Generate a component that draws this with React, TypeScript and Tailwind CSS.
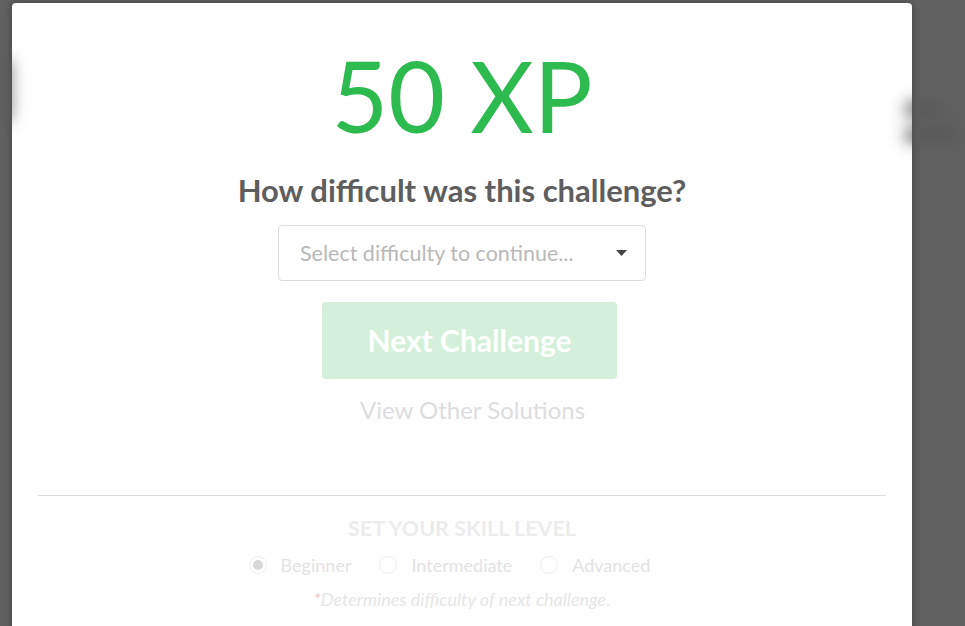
import React from "react";

const levels = ["Beginner", "Intermediate", "Advanced"];

const App: React.FC = () => {
  return (
    <div
      className="relative h-[626px] w-[965px] overflow-hidden bg-[#616161]"
      style={{ fontFamily: "Lato, 'Open Sans', sans-serif" }}
    >
      {/* faint blurred page content behind the overlay */}
      <div className="absolute left-[905px] top-[102px] h-[14px] w-[40px] rounded-full bg-[#5a5a5a] blur-[8px]" />
      <div className="absolute left-[905px] top-[128px] h-[14px] w-[55px] rounded-full bg-[#585858] blur-[8px]" />
      <div className="absolute left-0 top-[60px] h-[60px] w-[10px] bg-[#5b5b5b] blur-[8px]" />

      <div className="flex pl-[12px] pt-[3px]">
        <div className="flex h-[640px] w-[900px] flex-col items-center rounded-[4px] bg-white pt-[43px] shadow-[0_0_8px_rgba(0,0,0,0.35)]">
          <div className="text-[98px] leading-none font-normal text-[#2dba4e]">50 XP</div>

          <h2 className="mt-[28px] text-[31px] leading-[36px] font-bold text-[#5e5e5e]">
            How difficult was this challenge?
          </h2>

          <div className="mt-[17px] flex h-[56px] w-[368px] items-center justify-between rounded-[4px] border border-[#dcdcdc] pl-[21px] pr-[18px]">
            <span className="text-[21.5px] text-[#b9b9b9]">Select difficulty to continue...</span>
            <svg width="11" height="6" viewBox="0 0 11 6">
              <path d="M0 0h11L5.5 6z" fill="#444" />
            </svg>
          </div>

          <button className="mt-[21px] ml-[15px] flex h-[77px] w-[295px] items-center justify-center rounded-[4px] bg-[#d4f0da] text-[30px] font-bold text-white">
            Next Challenge
          </button>

          <div className="mt-[17px] ml-[21px] text-[24px] leading-[28px] text-[#dcdde0]">View Other Solutions</div>

          <div className="mt-[71px] h-px w-[848px] bg-[#dddddd]" />

          <div className="mt-[19px] text-[21.5px] leading-[26px] font-bold text-[#ececec]">
            SET YOUR SKILL LEVEL
          </div>

          <div className="mt-[13px] mr-[25px] flex items-center gap-[28px]">
            {levels.map((level, i) => (
              <label key={level} className="flex items-center gap-[14px]">
                <span className="flex h-[18px] w-[18px] items-center justify-center rounded-full border border-[#eeeeee]">
                  {i === 0 && <span className="h-[10px] w-[10px] rounded-full bg-[#d8d8d8]" />}
                </span>
                <span className="text-[18px] leading-[22px] text-[#e3e3e3]">{level}</span>
              </label>
            ))}
          </div>

          <div className="mt-[12px] text-[18px] leading-[22px] italic text-[#e6e6e6]">
            <span className="text-[#f5c6c6]">*</span>Determines difficulty of next challenge.
          </div>
        </div>
      </div>
    </div>
  );
};

export default App;
